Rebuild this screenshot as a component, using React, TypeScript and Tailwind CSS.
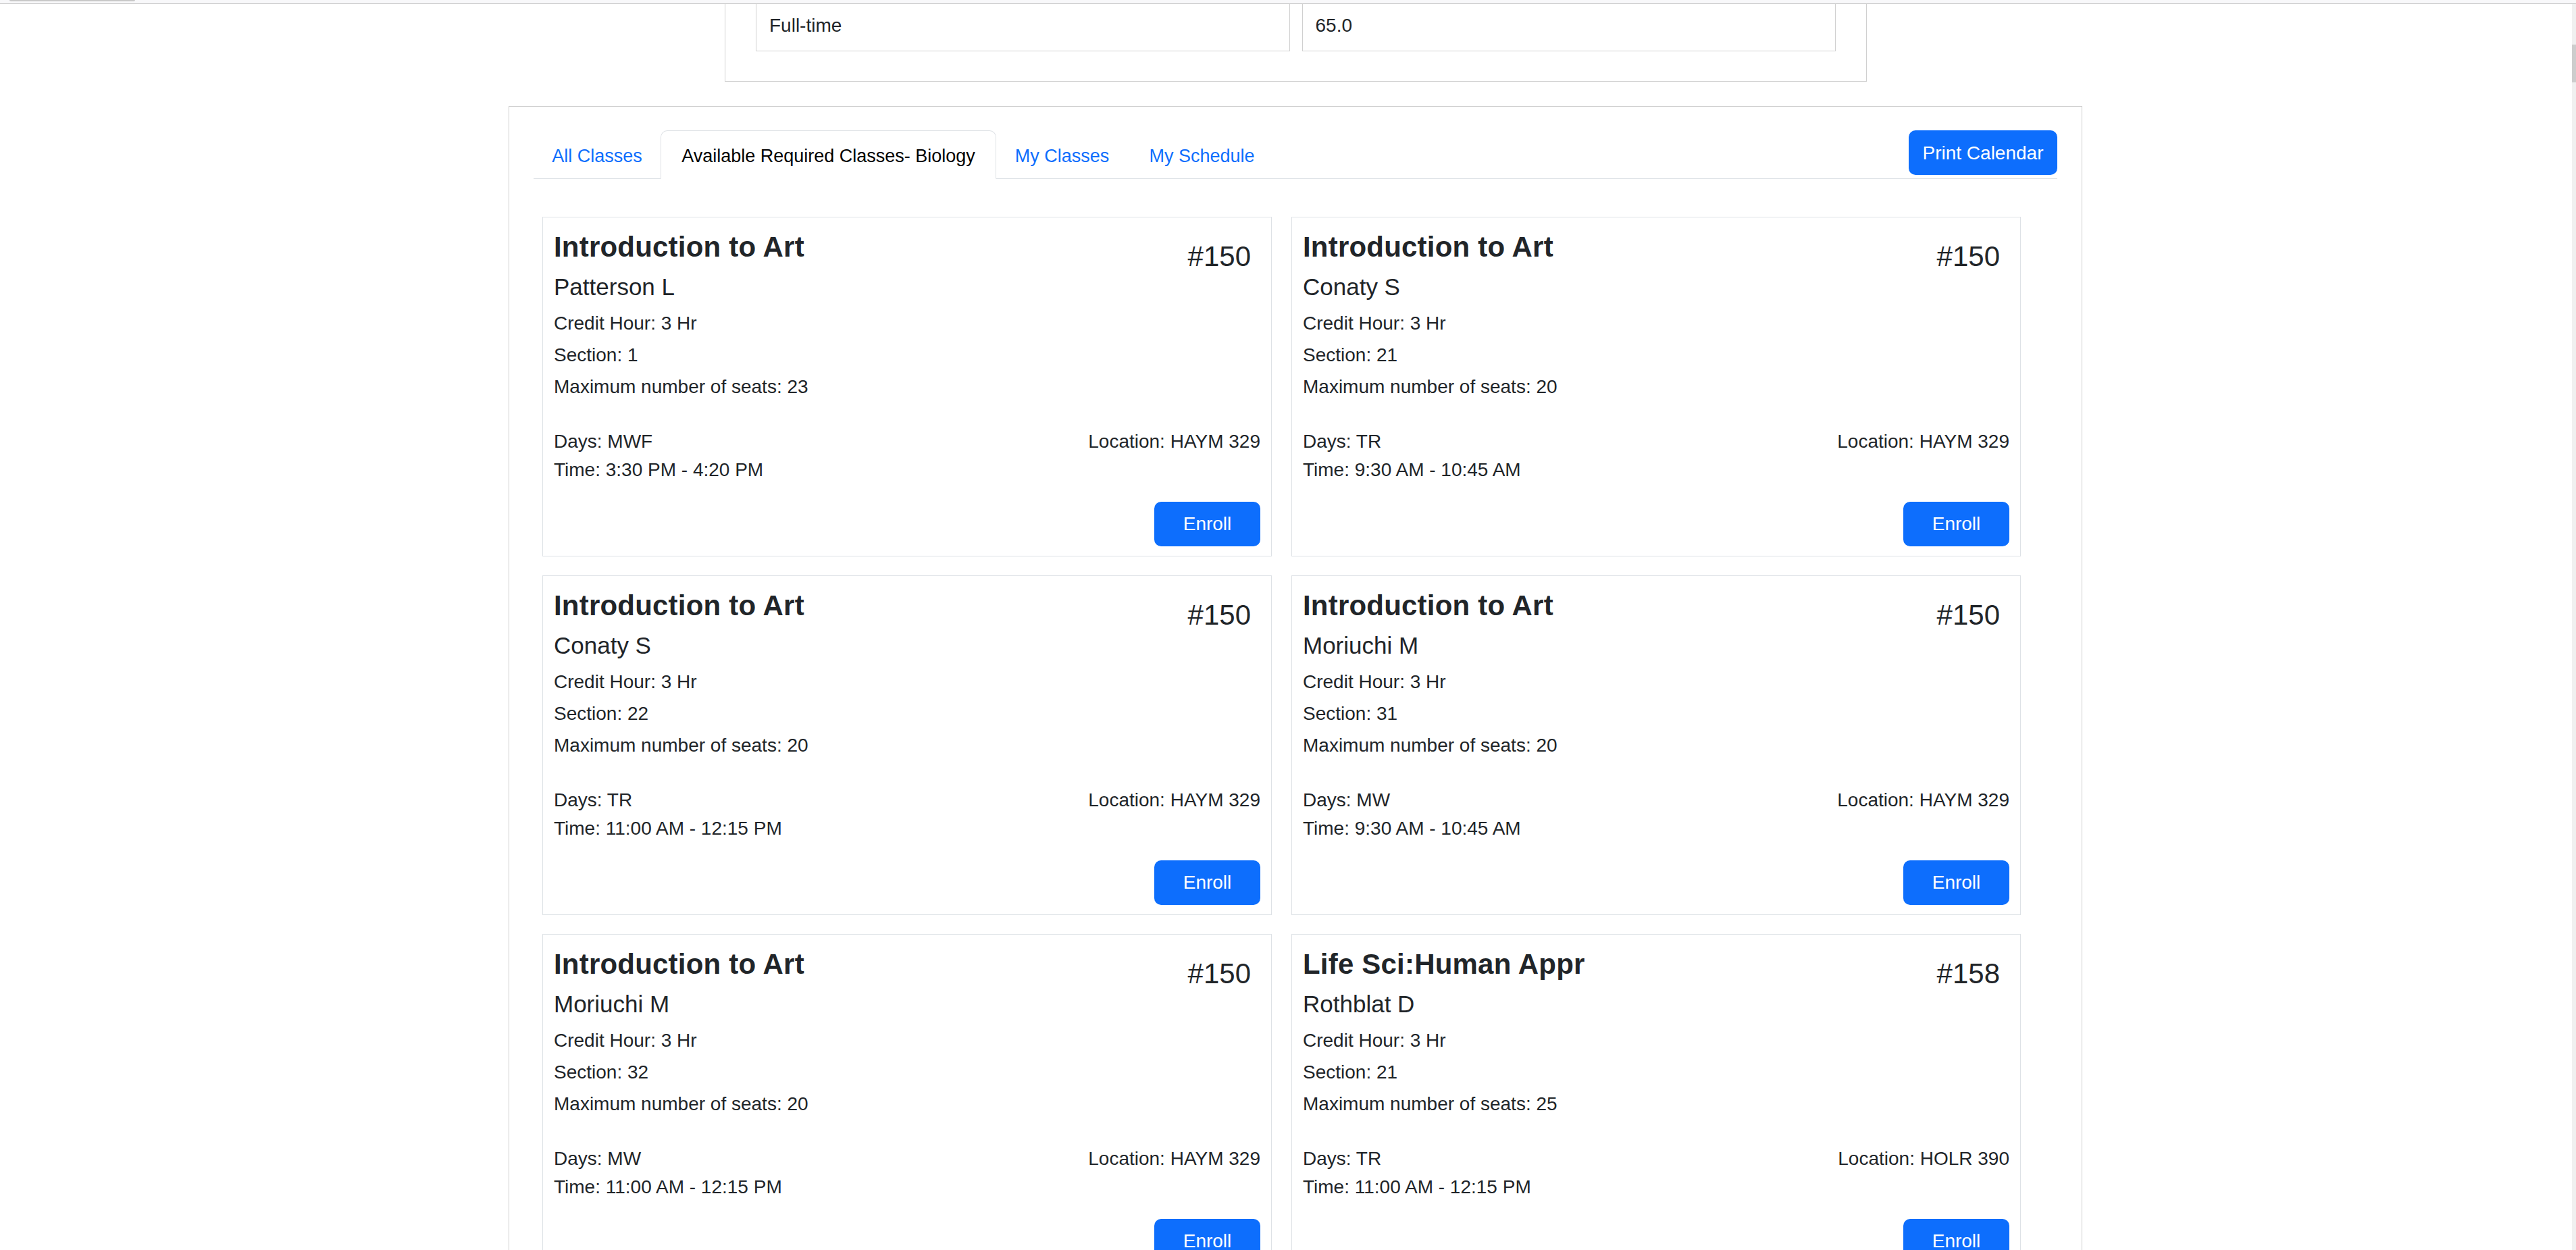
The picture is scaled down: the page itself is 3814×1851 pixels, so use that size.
import React from "react";

type Course = {
  title: string;
  code: string;
  instructor: string;
  section: string;
  seats: string;
  days: string;
  location: string;
  time: string;
};

const courses: Course[] = [
  { title: "Introduction to Art", code: "#150", instructor: "Patterson L", section: "1", seats: "23", days: "MWF", location: "HAYM 329", time: "3:30 PM - 4:20 PM" },
  { title: "Introduction to Art", code: "#150", instructor: "Conaty S", section: "21", seats: "20", days: "TR", location: "HAYM 329", time: "9:30 AM - 10:45 AM" },
  { title: "Introduction to Art", code: "#150", instructor: "Conaty S", section: "22", seats: "20", days: "TR", location: "HAYM 329", time: "11:00 AM - 12:15 PM" },
  { title: "Introduction to Art", code: "#150", instructor: "Moriuchi M", section: "31", seats: "20", days: "MW", location: "HAYM 329", time: "9:30 AM - 10:45 AM" },
  { title: "Introduction to Art", code: "#150", instructor: "Moriuchi M", section: "32", seats: "20", days: "MW", location: "HAYM 329", time: "11:00 AM - 12:15 PM" },
  { title: "Life Sci:Human Appr", code: "#158", instructor: "Rothblat D", section: "21", seats: "25", days: "TR", location: "HOLR 390", time: "11:00 AM - 12:15 PM" },
];

const tabs = [
  { label: "All Classes", w: "w-[188px]", active: false },
  { label: "Available Required Classes- Biology", w: "w-[497px]", active: true },
  { label: "My Classes", w: "w-[195px]", active: false },
  { label: "My Schedule", w: "w-[219px]", active: false },
];

function CourseCard({ c }: { c: Course }) {
  return (
    <div className="h-[503px] border border-[#dee2e6] bg-white px-[16px] pt-[19px] flex flex-col text-[#212529]">
      <div className="h-[50px] flex justify-between items-start">
        <h4 className="text-[42px] leading-[50px] font-bold tracking-[0.2px]">{c.title}</h4>
        <span className="text-[42px] leading-[50px] mt-[14px] mr-[14px]">{c.code}</span>
      </div>
      <h5 className="mt-[13px] text-[35px] leading-[42px]">{c.instructor}</h5>
      <p className="mt-[9px] text-[28px] leading-[47px]">Credit Hour: 3 Hr</p>
      <p className="text-[28px] leading-[47px]">Section: {c.section}</p>
      <p className="text-[28px] leading-[47px]">Maximum number of seats: {c.seats}</p>
      <div className="mt-[37px] flex justify-between text-[28px] leading-[42px]">
        <span>Days: {c.days}</span>
        <span>Location: {c.location}</span>
      </div>
      <p className="text-[28px] leading-[42px]">Time: {c.time}</p>
      <div className="mt-[26px] flex justify-end">
        <button className="w-[157px] h-[66px] rounded-[10px] bg-[#0d6efd] text-white text-[28px]">Enroll</button>
      </div>
    </div>
  );
}

export default function App() {
  return (
    <div
      className="relative w-[3814px] h-[1851px] overflow-hidden bg-white"
      style={{ fontFamily: '"Liberation Sans", Arial, sans-serif' }}
    >
      {/* top strip */}
      <div className="relative h-[6px] bg-[#f8f8fa] border-b border-[#c8c8c8]">
        <div className="absolute left-[14px] top-0 w-[186px] h-[2px] rounded-b bg-[#c8c8c8]" />
      </div>

      {/* fake scrollbar */}
      <div className="absolute right-0 top-[6px] w-[6px] h-[1845px] bg-[#f0f0f0]">
        <div className="mt-[60px] h-[56px] bg-[#cdcdcd]" />
      </div>

      {/* summary box (scrolled) */}
      <div className="ml-[1073px] w-[1691px] border-l border-r border-b border-[#d0d0d0] px-[45px] pb-[44px]">
        <div className="grid grid-cols-2 gap-x-[18px]">
          <div className="border-l border-r border-b border-[#d0d0d0] pl-[19px] pt-[11px] pb-[16px] text-[28px] leading-[42px] text-[#212529]">
            Full-time
          </div>
          <div className="border-l border-r border-b border-[#d0d0d0] pl-[19px] pt-[11px] pb-[16px] text-[28px] leading-[42px] text-[#212529]">
            65.0
          </div>
        </div>
      </div>

      {/* main card */}
      <div className="mt-[36px] ml-[753px] w-[2330px] h-[1800px] border border-[#cccccc] pt-[35px] px-[36px]">
        <div className="flex items-start border-b border-[#dee2e6]">
          <nav className="flex -mb-px">
            {tabs.map((t) => (
              <div
                key={t.label}
                className={`${t.w} text-center pt-[16px] pb-[12px] text-[27px] leading-[42px] border ${
                  t.active
                    ? "border-[#dee2e6] border-b-white rounded-t-[10px] bg-white text-black"
                    : "border-transparent text-[#0d6efd]"
                }`}
              >
                {t.label}
              </div>
            ))}
          </nav>
          <button className="ml-auto w-[220px] h-[66px] pt-[2px] rounded-[10px] bg-[#0d6efd] text-white text-[28px]">
            Print Calendar
          </button>
        </div>

        <div className="mt-[56px] pl-[13px] grid grid-cols-[1080px_1080px] gap-x-[29px] gap-y-[28px]">
          {courses.map((c, i) => (
            <CourseCard key={i} c={c} />
          ))}
        </div>
      </div>
    </div>
  );
}
